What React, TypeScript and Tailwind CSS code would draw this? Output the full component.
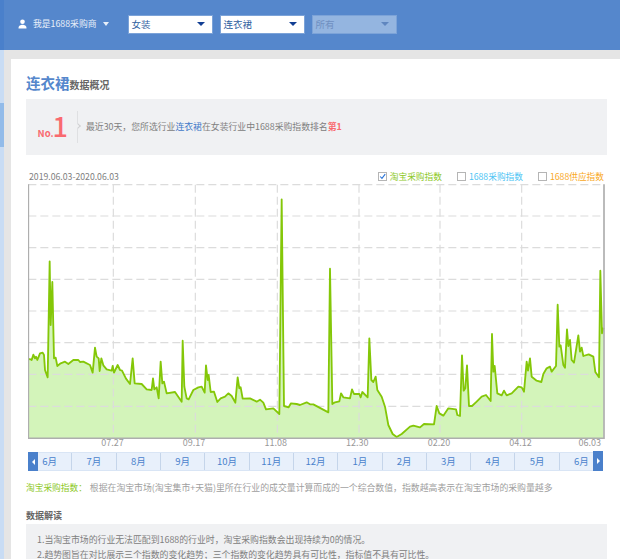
const pts = "85,537 92,538 95,540 100,524 105,535 108,530 112,540 120,520 128,518 132,525 135,570 143,592 149,244 152,435 157,306 162,535 167,533 172,558 182,550 195,545 205,552 220,540 235,540 240,546 250,545 270,555 278,578 285,503 290,530 296,535 299,573 304,535 310,556 320,568 335,572 338,558 342,578 353,555 360,570 366,572 378,596 390,612 398,535 404,610 425,612 440,628 455,630 459,595 463,628 470,622 476,655 482,545 487,610 492,605 500,640 525,636 545,665 548,482 553,620 560,655 566,658 580,630 595,622 605,620 614,638 618,556 623,600 626,585 632,636 642,635 652,666 662,655 675,650 685,640 695,648 706,668 713,592 718,625 722,622 728,656 750,655 770,665 780,659 790,668 798,688 820,685 838,702 845,58 852,678 866,682 873,670 890,672 900,675 920,667 930,673 940,673 985,697 990,266 997,672 1005,667 1018,664 1023,640 1030,652 1050,655 1056,628 1062,642 1078,642 1082,652 1087,636 1103,652 1108,475 1114,600 1120,606 1127,590 1132,630 1145,650 1155,680 1165,735 1178,762 1190,771 1205,762 1230,740 1240,737 1260,742 1272,732 1302,733 1310,678 1318,700 1330,707 1345,685 1368,688 1372,705 1380,708 1386,526 1391,632 1396,625 1401,556 1407,678 1416,678 1430,665 1445,650 1458,645 1472,663 1476,462 1480,575 1484,558 1492,640 1505,646 1512,632 1520,646 1535,640 1555,620 1565,622 1572,635 1580,545 1584,572 1590,535 1595,590 1610,602 1624,606 1630,582 1640,565 1650,560 1655,575 1668,558 1673,374 1678,500 1682,496 1690,555 1695,563 1701,448 1705,498 1710,480 1715,540 1722,548 1735,466 1740,515 1745,503 1750,528 1766,523 1780,530 1786,576 1797,592 1801,272 1806,460 1811,443";

const months = ["6月","7月","8月","9月","10月","11月","12月","1月","2月","3月","4月","5月","6月"];
const ticks = ["07.27","09.17","11.08","12.30","02.20","04.12"];
const font = "font-['Microsoft_YaHei','Noto_Sans_CJK_SC','Liberation_Sans',sans-serif]";

function Select({ label, disabled }: { label: string; disabled?: boolean }) {
  return (
    <div className={`flex h-[19px] w-[85px] items-center justify-between pl-[3px] pr-[7px] text-[9.5px] border ${disabled ? "bg-[#94b5e0] border-[#7ca3d8] text-[#6f8fc0]" : "bg-white border-[#7ca3d8] text-[#2f5f9f]"}`}>
      <span>{label}</span>
      <span className={`w-0 h-0 border-x-[4px] border-x-transparent border-t-[4px] ${disabled ? "border-t-[#5f86bf]" : "border-t-[#123f94]"}`} />
    </div>
  );
}

function Legend({ label, color, checked }: { label: string; color: string; checked?: boolean }) {
  return (
    <div className="flex items-center gap-[3px]" style={{ color }}>
      <span className="w-[9px] h-[9px] border border-[#b5b5b5] bg-white flex items-center justify-center">
        {checked && (
          <svg width="9" height="9" viewBox="0 0 9 9">
            <path d="M1.5 4.5 L3.8 7 L8 1.5" fill="none" stroke="#2a74d8" strokeWidth="1.4" />
          </svg>
        )}
      </span>
      <span>{label}</span>
    </div>
  );
}

export default function App() {
  return (
    <div className={`w-[620px] h-[559px] overflow-hidden flex flex-col bg-[#e5e5e5] ${font}`}>
      <header className="h-[50px] shrink-0 bg-[#5587cc] flex items-center pb-[2px] text-white">
        <div className="w-[4px] self-stretch -mb-[2px] bg-[#4a80cb]" />
        <svg className="ml-[14px]" width="9" height="10" viewBox="0 0 9 10">
          <circle cx="4.5" cy="2.8" r="2.3" fill="#fff" />
          <path d="M0.5 9.5 C0.5 6.5 2.5 5.8 4.5 5.8 C6.5 5.8 8.5 6.5 8.5 9.5 Z" fill="#fff" />
        </svg>
        <span className="ml-[6px] text-[8.8px] text-[#e8eff9]">我是1688采购商</span>
        <span className="ml-[6px] w-0 h-0 border-x-[3.5px] border-x-transparent border-t-[4px] border-t-[#e8eff9]" />
        <div className="ml-[19px] flex gap-[7px]">
          <Select label="女装" />
          <Select label="连衣裙" />
          <Select label="所有" disabled />
        </div>
      </header>
      <div className="flex-1 flex min-h-0">
        <aside className="w-[4px] shrink-0 bg-[#c8dcf4] flex flex-col">
          <div className="mt-[53px] h-[44px] bg-[#92bbe9]" />
        </aside>
        <main className="ml-[7px] mt-[9px] flex-1 bg-white pl-[15px] pr-[13px] min-w-0">
          <h1 className="mt-[14px] flex items-end h-[20px]">
            <span className="text-[14.5px] leading-[20px] font-bold text-[#5587cc]">连衣裙</span>
            <span className="text-[10px] leading-[16px] font-bold text-[#666]">数据概况</span>
          </h1>
          <section className="mt-[6px] h-[56px] bg-[#f0f1f3] flex items-center">
            <div className="w-[51px] flex items-baseline justify-end text-[#f96a6f] pr-[9px]">
              <span className="text-[9.5px] font-bold">No.</span>
              <span className="-ml-[1px] text-[27px] leading-[24px] font-medium">1</span>
            </div>
            <div className="relative w-[1px] h-[32px] bg-[#dfe0e2]">
              <span className="absolute left-[-1px] top-[13px] w-[4px] h-[4px] bg-[#f0f1f3] border-t border-r border-[#cfd0d2] rotate-45" />
            </div>
            <p className="ml-[8px] text-[8.85px] text-[#808080]">
              最近30天，您所选行业<span className="text-[#3f78c8]">连衣裙</span>在女装行业中1688采购指数排名<span className="text-[#f96a6f] font-bold">第1</span>
            </p>
          </section>
          <div className="mt-[14px] h-[15px] flex items-center justify-between text-[8.7px]">
            <span className="ml-[3px] text-[#808080]">2019.06.03-2020.06.03</span>
            <div className="flex gap-[15px] mr-[3px]">
              <Legend label="淘宝采购指数" color="#8cc81e" checked />
              <Legend label="1688采购指数" color="#4cc4f4" />
              <Legend label="1688供应指数" color="#f9a825" />
            </div>
          </div>
          <svg className="block ml-[2px]" width="579" height="255" viewBox="84 12 1737 765">
            <polygon points={`85,775 ${pts} 1811,775`} fill="#d3f4ba" />
            <g fill="none" stroke="#dcdcdc" strokeWidth="3.5" strokeDasharray="24 12">
              {[14, 108, 203, 298, 393, 488, 583, 679].map((y) => (
                <line key={y} x1="85" x2="1810" y1={y} y2={y} />
              ))}
              {[340, 586, 832, 1077, 1320, 1565].map((x) => (
                <line key={x} x1={x} x2={x} y1="14" y2="775" />
              ))}
            </g>
            <polyline points={pts} fill="none" stroke="#84c708" strokeWidth="5.5" strokeLinejoin="round" />
            <path d="M85 13 V775 H1812 V13" fill="none" stroke="#aeaeae" strokeWidth="5" />
          </svg>
          <div className="relative h-[12px] -mt-[2px] -ml-[26px] text-[9px] leading-[12px] text-[#999]">
            {ticks.map((t, i) => (
              <span key={t} className="absolute -translate-x-1/2" style={{ left: 112.5 + i * 81.6 }}>{t}</span>
            ))}
            <span className="absolute -translate-x-1/2 left-[589.7px]">06.03</span>
          </div>
          <nav className="relative mt-[3px] ml-[2px] h-[19px] w-[575px] flex items-stretch text-[9.5px] text-[#4a82cc] bg-[#e8f0fb] border-y border-[#d9e5f5]">
            {months.map((m, i) => (
              <div key={i} className={`flex-1 flex items-center justify-center ${i < 12 ? "border-r border-[#c5d5ea]" : ""}`}>{m}</div>
            ))}
            <div className="absolute left-0 -top-px -bottom-px w-[10px] bg-[#4a80cb] flex items-center justify-center">
              <span className="w-0 h-0 border-y-[3px] border-y-transparent border-r-[3px] border-r-white" />
            </div>
            <div className="absolute right-0 -top-[2px] -bottom-px w-[10px] bg-[#4a80cb] flex items-center justify-center">
              <span className="w-0 h-0 border-y-[3px] border-y-transparent border-l-[3px] border-l-white" />
            </div>
          </nav>
          <p className="mt-[10px] text-[8.7px] text-[#a0a0a0] whitespace-nowrap">
            <span className="text-[#8cc81e]">淘宝采购指数：</span><span className="ml-[3px] text-[8.87px]">根据在淘宝市场(淘宝集市+天猫)里所在行业的成交量计算而成的一个综合数值，指数越高表示在淘宝市场的采购量越多</span>
          </p>
          <h2 className="mt-[15px] text-[9px] font-bold text-[#666]">数据解读</h2>
          <div className="mt-[1px] bg-[#f0f1f3] pl-[11px] pt-[9px] pb-[20px] text-[8.87px] leading-[14.7px] text-[#808080] whitespace-nowrap">
            <p>1.当淘宝市场的行业无法匹配到1688的行业时，淘宝采购指数会出现持续为0的情况。</p>
            <p>2.趋势图旨在对比展示三个指数的变化趋势；三个指数的变化趋势具有可比性，指标值不具有可比性。</p>
          </div>
        </main>
      </div>
    </div>
  );
}
